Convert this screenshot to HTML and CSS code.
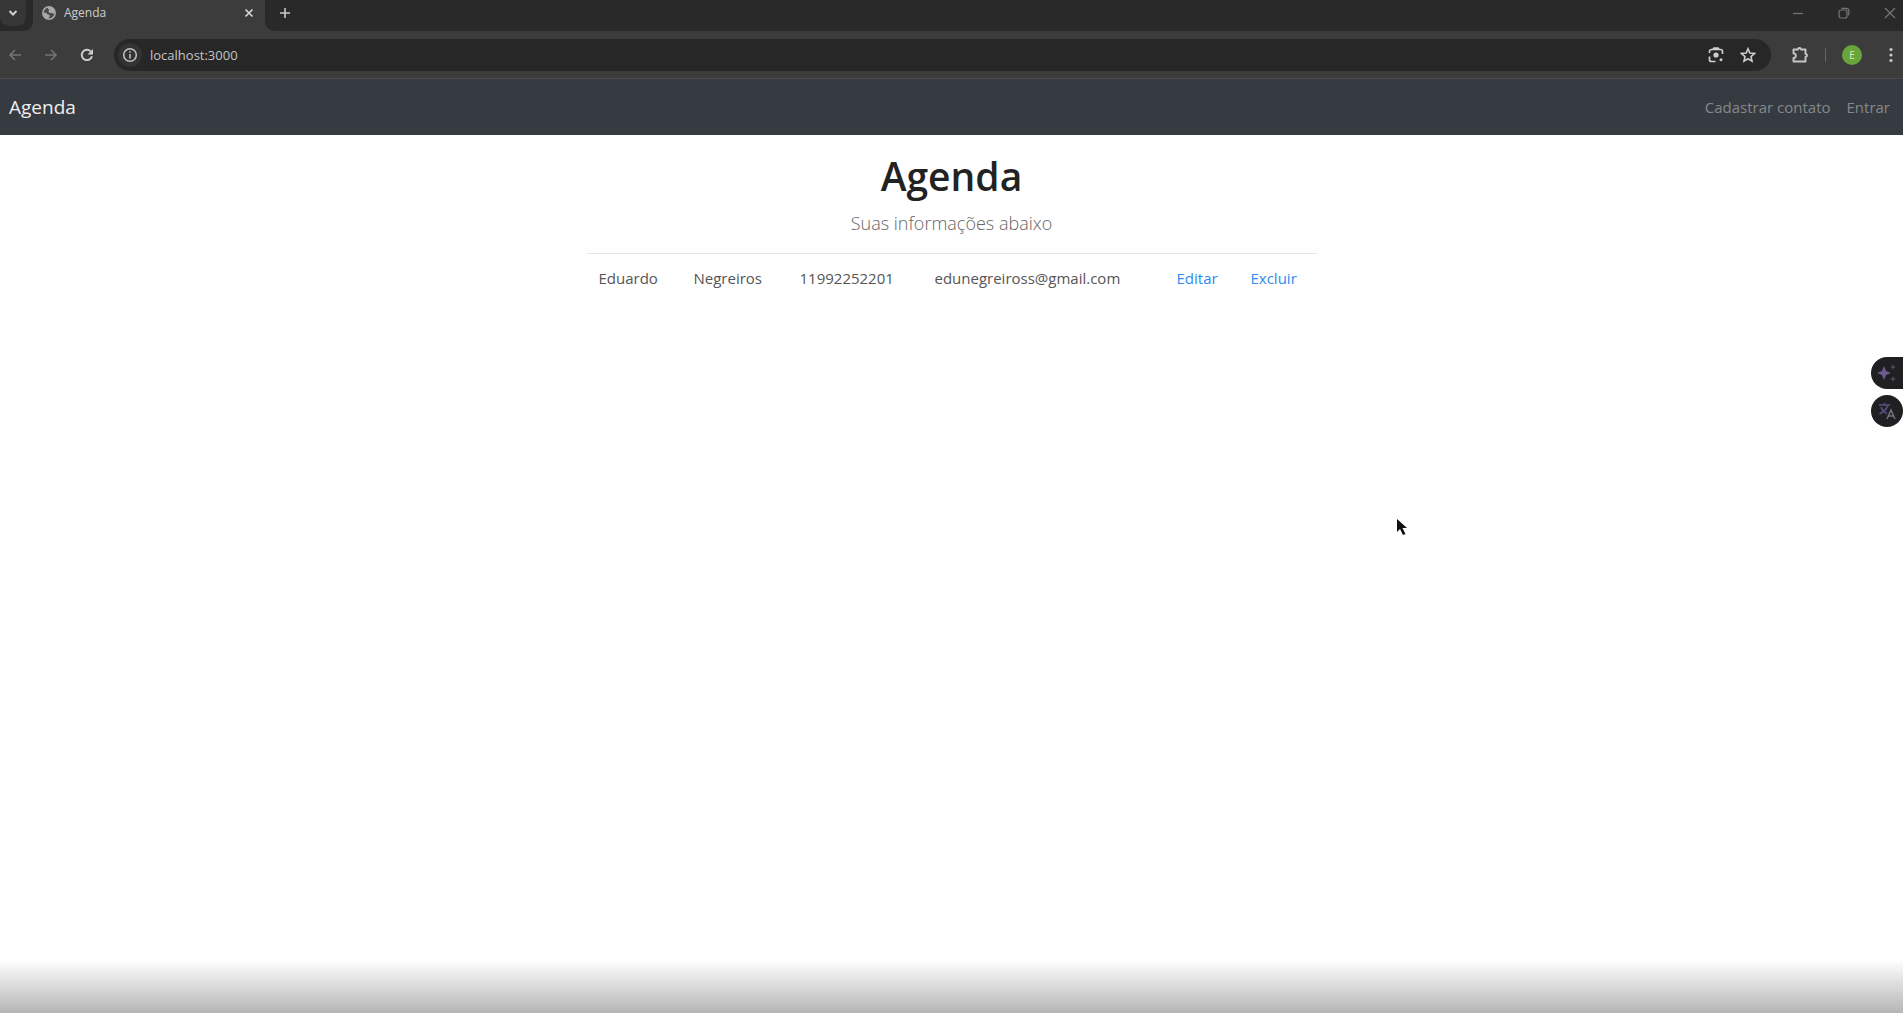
FILE: index.html
```html
<!DOCTYPE html>
<html lang="pt-BR">
<head>
<meta charset="utf-8">
<title>Agenda</title>
<link rel="stylesheet" href="styles.css">
</head>
<body>
<div class="browser">
  <div class="tabstrip">
    <div class="strip-start">
      <button class="tab-search" aria-label="Pesquisar guias"><svg width="10" height="10" viewBox="0 0 10 10"><path d="M1.500 3l3.500 3.500L8.500 3" fill="none" stroke="#d0d0d0" stroke-width="2"/></svg></button>
    </div>
    <div class="tab">
      <svg width="14" height="14" viewBox="0 0 14 14"><circle cx="7" cy="7" r="6.200" fill="#4a4a4a" stroke="#a9a9a9" stroke-width="1.500"/><path d="M1 6.500l3 .3 1.800 1.700 1.800.3v1.900L6 13C3 12.500 1 10 1 6.500zM6 1h3.500c2 .8 3.500 3 3.500 5.500l-1.500 1.700L10.300 7H7.500L6.300 5.500 7.500 4 6 3z" fill="#a9a9a9"/></svg>
      <span class="tab-title">Agenda</span>
      <button class="icon-btn" aria-label="Fechar guia"><svg width="10" height="10" viewBox="0 0 10 10"><path d="M1.500 1.500l7 7M8.500 1.500l-7 7" stroke="#d6d6d6" stroke-width="1.700"/></svg></button>
    </div>
    <div class="strip-rest">
      <button class="icon-btn new-tab" aria-label="Nova guia"><svg width="12" height="12" viewBox="0 0 12 12"><path d="M6 1v10M1 6h10" stroke="#c8c8c8" stroke-width="1.600"/></svg></button>
      <div class="window-controls">
        <button class="icon-btn" aria-label="Minimizar"><svg width="12" height="12" viewBox="0 0 12 12"><path d="M1 6.500h10" stroke="#777" stroke-width="1.200"/></svg></button>
        <button class="icon-btn" aria-label="Restaurar"><svg width="12" height="12" viewBox="0 0 12 12"><g fill="none" stroke="#777" stroke-width="1.200"><rect x="1" y="3" width="8" height="8" rx="2"/><path d="M3.500 1.300H8.500a2.300 2.300 0 0 1 2.300 2.300v5"/></g></svg></button>
        <button class="icon-btn" aria-label="Fechar"><svg width="12" height="12" viewBox="0 0 12 12"><path d="M1 1l10 10M11 1L1 11" stroke="#777" stroke-width="1.200"/></svg></button>
      </div>
    </div>
  </div>
  <div class="toolbar">
    <div class="nav-buttons">
      <button class="icon-btn" aria-label="Voltar"><svg width="14" height="14" viewBox="0 0 14 14"><path d="M13 7H2M7 2L2 7l5 5" fill="none" stroke="#737373" stroke-width="1.600"/></svg></button>
      <button class="icon-btn" aria-label="Avançar"><svg width="14" height="14" viewBox="0 0 14 14"><path d="M1 7h11M7 2l5 5-5 5" fill="none" stroke="#737373" stroke-width="1.600"/></svg></button>
      <button class="icon-btn" aria-label="Recarregar"><svg width="14" height="14" viewBox="0 0 14 14"><path d="M12 8.300A5.200 5.200 0 1 1 10.700 3.300" fill="none" stroke="#cfcfcf" stroke-width="1.900"/><path d="M13 1v5.500H7.500z" fill="#cfcfcf"/></svg></button>
    </div>
    <div class="address">
      <button class="site-info" aria-label="Informações do site"><svg width="16" height="16" viewBox="0 0 16 16"><circle cx="8" cy="8" r="6.300" fill="none" stroke="#c4c4c4" stroke-width="1.500"/><path d="M8 7v4.500M8 4.300v1.500" stroke="#c4c4c4" stroke-width="1.500"/></svg></button>
      <input class="url" type="text" value="localhost:3000" aria-label="Endereço">
      <button class="icon-btn" aria-label="Pesquisar imagem"><svg width="16" height="16" viewBox="0 0 16 16"><path d="M1.500 6V4.500a2 2 0 0 1 2-2h9a2 2 0 0 1 2 2V7M1.500 9.500V12.500a2 2 0 0 0 2 2H7.500M5 2l1-1h4l1 1" fill="none" stroke="#cecece" stroke-width="1.700"/><circle cx="8" cy="8" r="2.600" fill="#cecece"/><circle cx="13" cy="12.800" r="1.500" fill="#cecece"/></svg></button>
      <button class="icon-btn" aria-label="Adicionar aos favoritos"><svg width="16" height="16" viewBox="0 0 16 16"><path d="M8 1.800l1.800 4.300 4.700.4-3.500 3.100 1 4.600L8 11.800l-4 2.400 1-4.600-3.500-3.100 4.700-.4z" fill="none" stroke="#cecece" stroke-width="1.600"/></svg></button>
    </div>
    <div class="actions">
      <button class="icon-btn" aria-label="Extensões"><svg width="18" height="18" viewBox="0 0 18 18"><path d="M2.500 3.500H7a1.500 1.500 0 0 1 3 0h4.500V8a1.500 1.500 0 0 1 0 3v4.500h-12V12a2.300 2.300 0 0 0 0-4.600z" fill="none" stroke="#c6c6c6" stroke-width="1.900" stroke-linejoin="round"/></svg></button>
      <span class="divider"></span>
      <button class="avatar" aria-label="Perfil">E</button>
      <button class="icon-btn" aria-label="Menu"><svg width="6" height="16" viewBox="0 0 6 16"><g fill="#c8c8c8"><circle cx="3" cy="2.500" r="1.600"/><circle cx="3" cy="8" r="1.600"/><circle cx="3" cy="13.500" r="1.600"/></g></svg></button>
    </div>
  </div>
</div>
<nav class="navbar">
  <a class="brand" href="#">Agenda</a>
  <div class="links"><a href="#">Cadastrar contato</a><a href="#">Entrar</a></div>
</nav>
<main class="content">
  <h1>Agenda</h1>
  <p class="lead">Suas informações abaixo</p>
  <table class="contacts">
    <colgroup><col class="c-name"><col class="c-surname"><col class="c-phone"><col class="c-mail"><col class="c-edit"><col class="c-delete"></colgroup>
    <tbody><tr><td>Eduardo</td><td>Negreiros</td><td>11992252201</td><td>edunegreiross@gmail.com</td><td><a href="#">Editar</a></td><td><a href="#">Excluir</a></td></tr></tbody>
  </table>
</main>
<div class="floating">
  <button class="float-ai" aria-label="Assistente"><svg width="22" height="22" viewBox="0 0 22 22"><path d="M8 4l2 5 5 2-5 2-2 5-2-5-5-2 5-2z" fill="#6d5b91"/><path d="M17 2l.8 2.200 2.200.8-2.200.8L17 8l-.8-2.200L14 5l2.200-.8zM17 14l.8 2.200 2.200.8-2.200.8-.8 2.200-.8-2.200L14 17l2.200-.8z" fill="#55505f"/></svg></button>
  <button class="float-translate" aria-label="Traduzir"><svg width="20" height="20" viewBox="0 0 20 20"><path d="M2 4h11M7.500 2v2M11 4C10 8 6 11 2.500 13M4 6c1 3 3 5 6 6.500" fill="none" stroke="#5b4f80" stroke-width="1.600"/><path d="M10 18l4-9 4 9M11.500 15h5" fill="none" stroke="#77737f" stroke-width="1.500"/></svg></button>
</div>
<svg class="cursor" width="12" height="20" viewBox="0 0 12 20"><path d="M1 1v13l3-3 3 6 2.500-1-3-6H11z" fill="#111"/></svg>
<div class="shade"></div>
</body>
</html>
```
FILE: styles.css
```css
* { box-sizing: border-box; }
body {
  margin: 0;
  min-height: 100vh;
  position: relative;
  background: #fff;
  color: #555;
  font: 15px/24px "Open Sans", "Noto Sans", sans-serif;
}
button { border: 0; padding: 0; background: none; color: inherit; font: inherit; }
a { color: #2c8cf0; text-decoration: none; }
svg { display: block; }
.icon-btn { display: flex; align-items: center; justify-content: center; }

.browser { background: #3c3c3c; border-bottom: 1px solid #4a4b4d; }
.tabstrip { display: flex; height: 31px; }
.strip-start { width: 33px; background: #292929; border-bottom-right-radius: 9px; }
.tab-search {
  width: 26px; height: 26px;
  border-radius: 0 0 9px 9px; background: #363636;
  display: flex; align-items: center; justify-content: center;
}
.tab {
  width: 232px; padding: 0 11px 6px 9px;
  display: flex; align-items: center; gap: 8px;
}
.tab-title { flex: 1; font-size: 12px; line-height: 16px; color: #ccc; }
.strip-rest { flex: 1; display: flex; padding-right: 7px; background: #292929; border-bottom-left-radius: 9px; }
.new-tab { width: 40px; height: 25px; }
.window-controls { margin-left: auto; height: 25px; display: flex; align-items: center; gap: 34px; }

.toolbar { height: 47px; display: flex; align-items: center; padding: 0 9px 0 8px; }
.nav-buttons { display: flex; gap: 22px; margin-right: 20px; }
.address {
  flex: 1; min-width: 0; height: 32px; padding: 0 15px 0 4px;
  border-radius: 16px; background: #272727;
  display: flex; align-items: center; gap: 16px;
}
.site-info {
  width: 24px; height: 24px; margin-right: -8px; border-radius: 50%; background: #333;
  display: flex; align-items: center; justify-content: center;
}
.url {
  flex: 1; min-width: 0; border: 0; padding: 0; background: none;
  color: #c4c4c4; font: 13px/20px "Open Sans", "Noto Sans", sans-serif;
}
.actions { display: flex; align-items: center; margin-left: 20px; }
.divider { width: 1px; height: 14px; margin: 0 16px; background: #666; }
.avatar {
  width: 20px; height: 20px; margin-right: 26px; border-radius: 50%;
  background: #68a53a; color: #d5edc5; font-size: 10px; line-height: 20px;
}

.navbar {
  display: flex; align-items: center; justify-content: space-between;
  height: 56px; padding: 0 13px 0 9px; background: #363b41;
}
.brand { font-size: 19px; line-height: 30px; color: #eee; }
.links { display: flex; gap: 16px; }
.links a { color: #85888c; }

.content { width: 730px; max-width: 100%; margin: 0 auto; padding-top: 15px; text-align: center; }
h1 { margin: 0 0 7px; font-size: 39px; line-height: 52px; font-weight: 600; color: #222; }
.lead { margin: 0 0 16px; font-size: 18px; line-height: 28px; font-weight: 300; color: #666; }
.contacts { width: 100%; table-layout: fixed; border-collapse: collapse; text-align: left; }
.contacts td { padding: 12px; border-top: 1px solid #e4e4e4; white-space: nowrap; }
.c-name { width: 95px; }
.c-surname { width: 106px; }
.c-phone { width: 135px; }
.c-mail { width: 242px; }
.c-edit { width: 74px; }
.c-delete { width: 78px; }

.floating { position: absolute; top: 357px; right: 0; display: grid; gap: 6px; }
.floating button { width: 32px; height: 32px; background: #202022; display: flex; align-items: center; justify-content: center; }
.float-ai { border-radius: 16px 0 0 16px; }
.float-translate { border-radius: 50%; }
.cursor { position: absolute; top: 518px; left: 1396px; }
.shade {
  position: absolute; left: 0; right: 0; bottom: 0; height: 53px;
  background: linear-gradient(#fff, #b5b5b5);
}
```
